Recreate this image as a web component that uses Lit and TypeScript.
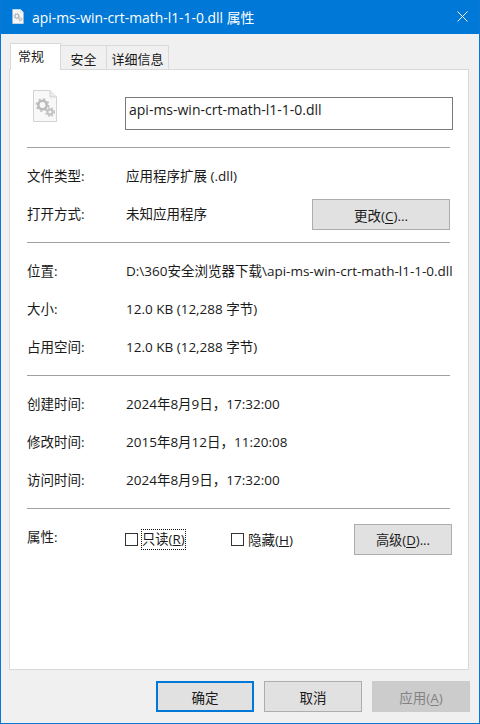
import { LitElement, html, css, svg } from "lit";
import { customElement } from "lit/decorators.js";

const fileIcon = (w: number, h: number, light: boolean) => html`<svg class="fi ${light ? "soft" : ""}" width=${w} height=${h} viewBox="0 0 24 32">
  <path d="M.5.5H17L23.5 7V31.5H.5Z" fill="#f8f8f8" stroke="#cfcfcf"/>
  <path d="M17 .5V7H23.5" fill="#e8e8e8" stroke="#cfcfcf"/>
  ${svg`
  <circle cx="9.5" cy="15" r="4.2" fill="none" stroke="#b4b4b4" stroke-width="2.6"/>
  <circle cx="9.5" cy="15" r="6.1" fill="none" stroke="#b4b4b4" stroke-width="1.6" stroke-dasharray="2 2.8"/>
  <circle cx="17" cy="22" r="2.6" fill="none" stroke="#bcbcbc" stroke-width="2.2"/>
  <circle cx="17" cy="22" r="4.4" fill="none" stroke="#bcbcbc" stroke-width="1.3" stroke-dasharray="1.6 2"/>`}
</svg>`;

@customElement("app-root")
export class AppRoot extends LitElement {
  static styles = css`
    :host { display: block; width: 480px; height: 724px; font-family: "Open Sans", "Noto Sans CJK SC", sans-serif; font-size: 13.5px; color: #1a1a1a; }
    .win { box-sizing: border-box; width: 480px; height: 724px; border: 1px solid #0a78d2; border-top: 0; background: #f0f0f0; display: flex; flex-direction: column; overflow: hidden; }
    .title { height: 33px; flex: none; background: #0078d7; color: #fff; display: flex; align-items: center; padding: 0 0 1px 11px; gap: 8px; font-size: 13.9px; }
    .title .t { flex: 1; }
    .close { width: 11px; height: 11px; margin-right: 11px; }
    .tabs { display: flex; margin: 9px 0 0 9px; height: 26px; align-items: flex-end; position: relative; z-index: 1; font-size: 13px; }
    .tab { box-sizing: border-box; height: 24px; border: 1px solid #d9d9d9; border-left: 0; border-bottom: 0; background: #f0f0f0; display: flex; align-items: center; justify-content: center; padding-top: 1px; }
    .tab.on { width: 51px; background: #fff; border-left: 1px solid #d9d9d9; margin-bottom: -1px; height: 27px; padding: 0 9px 4px 0; }
    .t2 { width: 46px; }
    .t3 { width: 62px; }
    .panel { box-sizing: border-box; width: 460px; height: 601px; margin-left: 8px; background: #fff; border: 1px solid #d9d9d9; padding: 0 17px; flex: none; display: flex; flex-direction: column; }
    .head { height: 77px; display: flex; align-items: flex-start; }
    .icon { width: 98px; padding: 20px 0 0 6px; box-sizing: border-box; flex: none; }
    .fi { display: block; }
    .soft { opacity: .9; }
    .name { box-sizing: border-box; flex: none; width: 328px; height: 33px; margin-top: 27px; border: 1px solid #7a7a7a; padding: 2px 3px; font-size: 14px; line-height: 20px; }
    hr { border: 0; border-top: 1px solid #a0a0a0; margin: 0; width: 423px; flex: none; }
    .group { display: flex; flex-direction: column; box-sizing: border-box; }
    .row { display: grid; grid-template-columns: 99px 1fr; height: 38px; align-items: center; white-space: nowrap; }
    .row.b { grid-template-columns: 99px 186px auto; }
    .row.b .btn { margin-top: 3px; }
    .btn { box-sizing: border-box; width: 138px; height: 31px; background: #e1e1e1; border: 1px solid #adadad; display: flex; align-items: center; justify-content: center; }
    .btn u { text-decoration-thickness: 1px; text-underline-offset: 2px; }
    .g1 { height: 94px; padding-top: 8px; }
    .g2 { padding-top: 8px; height: 132px; }
    .attrs { display: flex; align-items: center; height: 60px; white-space: nowrap; }
    .attrs .lbl { width: 98px; margin-top: -6px; flex: none; }
    .check { display: flex; align-items: center; margin-top: 0; flex: none; }
    .box { box-sizing: border-box; width: 13px; height: 13px; border: 1px solid #333; margin-right: 4px; flex: none; }
    .focus { outline: 1px dotted #111; outline-offset: 0; line-height: 19px; font-size: 13.3px; }
    .c1 { width: 106px; }
    .c2 { width: 123px; }
    .adv { width: 98px; height: 31px; flex: none; font-size: 13.2px; }
    .foot { flex: 1; display: flex; gap: 10px; padding: 11px 0 0 155px; }
    .fb { width: 98px; height: 31px; }
    .ok { border: 2px solid #0078d7; }
    .dis { background: #ccc; border-color: #ccc; color: #838383; }
  `;

  private row(a: string, b: string) {
    return html`<div class="row"><span>${a}</span><span>${b}</span></div>`;
  }

  render() {
    return html`<div class="win">
      <div class="title">
        ${fileIcon(12, 15, false)}
        <span class="t">api-ms-win-crt-math-l1-1-0.dll 属性</span>
        <svg class="close" viewBox="0 0 11 11"><path d="M.5.5l10 10M10.5.5l-10 10" stroke="#fff" fill="none"/></svg>
      </div>
      <div class="tabs">
        <div class="tab on">常规</div>
        <div class="tab t2">安全</div>
        <div class="tab t3">详细信息</div>
      </div>
      <div class="panel">
        <div class="head">
          <div class="icon">${fileIcon(24, 32, true)}</div>
          <div class="name">api-ms-win-crt-math-l1-1-0.dll</div>
        </div>
        <hr />
        <div class="group g1">
          ${this.row("文件类型:", "应用程序扩展 (.dll)")}
          <div class="row b"><span>打开方式:</span><span>未知应用程序</span><div class="btn"><span>更改(<u>C</u>)...</span></div></div>
        </div>
        <hr />
        <div class="group g2">
          ${this.row("位置:", "D:\\360安全浏览器下载\\api-ms-win-crt-math-l1-1-0.dll")}
          ${this.row("大小:", "12.0 KB (12,288 字节)")}
          ${this.row("占用空间:", "12.0 KB (12,288 字节)")}
        </div>
        <hr />
        <div class="group g2">
          ${this.row("创建时间:", "2024年8月9日，17:32:00")}
          ${this.row("修改时间:", "2015年8月12日，11:20:08")}
          ${this.row("访问时间:", "2024年8月9日，17:32:00")}
        </div>
        <hr />
        <div class="attrs">
          <span class="lbl">属性:</span>
          <div class="check c1"><span class="box"></span><span class="focus">只读(<u>R</u>)</span></div>
          <div class="check c2"><span class="box"></span><span>隐藏(<u>H</u>)</span></div>
          <div class="btn adv"><span>高级(<u>D</u>)...</span></div>
        </div>
      </div>
      <div class="foot">
        <div class="btn fb ok">确定</div>
        <div class="btn fb">取消</div>
        <div class="btn fb dis"><span>应用(<u>A</u>)</span></div>
      </div>
    </div>`;
  }
}
